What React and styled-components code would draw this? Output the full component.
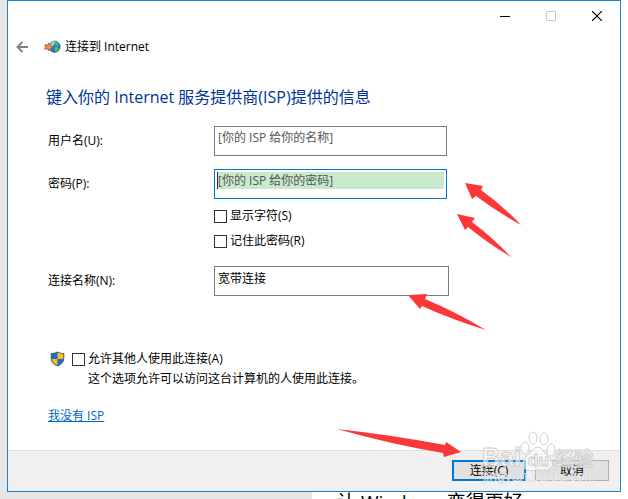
import React from "react";
import styled, { createGlobalStyle, css } from "styled-components";

const GlobalStyle = createGlobalStyle`
  *, *::before, *::after { box-sizing: border-box; }
  body {
    margin: 0;
    background: #fff;
    color: #000;
    font: 12px/16px "Open Sans", "Noto Sans CJK SC", sans-serif;
  }
  button, input { font: inherit; color: inherit; }
`;

const Desktop = styled.div`
  position: relative;
  display: flex;
  flex-direction: column;
  height: 100vh;
  overflow: hidden;
`;

const Stage = styled.div`
  display: flex;
  flex: none;
  padding-right: 7px;
`;

const Edge = styled.div`
  width: 7px;
  background: #e6e6e6;
`;

const Dialog = styled.main`
  position: relative;
  flex: 1;
  display: flex;
  flex-direction: column;
  min-width: 0;
  border: 1px solid #1a80d2;
  background: #fff;
`;

const Controls = styled.div`
  display: flex;
  justify-content: flex-end;
  height: 29px;
`;

const ControlButton = styled.button`
  display: flex;
  align-items: center;
  justify-content: center;
  width: 46px;
  padding: 0;
  border: 0;
  background: none;
  color: ${(p) => (p.disabled ? "#c8c8c8" : "#000")};
`;

const Header = styled.header`
  display: flex;
  align-items: center;
  height: 34px;
  padding-left: 8px;
`;

const BackButton = styled.button`
  display: flex;
  margin-right: 15px;
  padding: 0;
  border: 0;
  background: none;
`;

const Title = styled.span`
  margin-left: 4px;
`;

const Form = styled.form`
  display: flex;
  flex-direction: column;
`;

const Heading = styled.h1`
  margin: 22px 0 18px 38px;
  font-size: 16px;
  line-height: 22px;
  font-weight: 400;
  color: #003399;
`;

const FieldRow = styled.div`
  display: grid;
  grid-template-columns: 166px minmax(0, ${(p) => (p.$wide ? 235 : 233)}px);
  align-items: center;
  margin: 0 40px 13px;
`;

const InputFrame = styled.div`
  height: 30px;
  padding: 2px;
  border: 1px solid ${(p) => (p.$active ? "#0078d7" : "#7a7a7a")};
  background: #fff;
`;

const TextInput = styled.input`
  display: block;
  width: 100%;
  height: 17px;
  padding: 0;
  border: 0;
  border-left: 1px solid transparent;
  background: none;
  outline: 0;
  &::placeholder {
    color: #555;
    opacity: 1;
  }
  ${(p) =>
    p.$active &&
    css`
      border-left-color: #3c1c34;
      background: #c9e9cc;
    `}
`;

const Options = styled.div`
  display: flex;
  flex-direction: column;
  gap: 9px;
  margin: -4px 40px 17px 206px;
`;

const CheckLabel = styled.label`
  display: flex;
  align-items: center;
  gap: 3px;
`;

const CheckBox = styled.input`
  appearance: none;
  flex: none;
  width: 13px;
  height: 13px;
  margin: 0;
  border: 1px solid #333;
  background: #fff;
`;

const Sharing = styled.section`
  display: grid;
  grid-template-columns: 15px 1fr;
  column-gap: 7px;
  row-gap: 4px;
  align-items: center;
  margin: 42px 40px 21px 42px;
`;

const Note = styled.p`
  grid-column: 2;
  margin: 0 0 0 16px;
`;

const HelpLink = styled.a`
  align-self: flex-start;
  margin: 0 0 26px 40px;
  color: #0066cc;
`;

const Footer = styled.footer`
  display: flex;
  justify-content: flex-end;
  gap: 9px;
  padding: 9px 11px 10px;
  border-top: 1px solid #dfdfdf;
  background: #f0f0f0;
`;

const ActionButton = styled.button`
  width: 74px;
  height: 21px;
  padding: 0;
  line-height: 16px;
  border: ${(p) => (p.$primary ? "2px solid #0078d7" : "1px solid #adadad")};
  background: #e1e1e1;
`;

const Below = styled.div`
  display: flex;
  flex: 1;
  min-height: 0;
  overflow: hidden;
`;

const BelowPane = styled.div`
  flex: 0 0 312px;
  background: #e6e6e6;
`;

const BelowText = styled.p`
  margin: 0 0 0 25px;
  font-size: 19px;
  line-height: 20px;
  white-space: nowrap;
`;

const Annotations = styled.svg`
  position: absolute;
  top: 0;
  left: 0;
  pointer-events: none;
`;

const Watermark = styled.div`
  position: absolute;
  right: 20px;
  bottom: 0;
  width: 118px;
  height: 60px;
  pointer-events: none;
`;

const globe = (
  <svg width="17" height="14" viewBox="0 0 17 14" aria-hidden="true">
    <circle cx="10.5" cy="6.7" r="5.7" fill="#2874d0" stroke="#376aa4" strokeWidth=".7" />
    <path d="M6.5 3.3Q8 .7 11 1L12 3.2 9.8 4.7 8.5 7 6 6z" fill="#7fd6f0" />
    <path d="M10.3 1.2l2.2.4 2 2.3-.4 2.3-2.3-.4-1.7-2.4zM10.3 7.3l3-.2 1.6 2-2.6 2.7-1.6-1.4z" fill="#58bd3d" />
    <path d="M.7 4.9h3.6V2.9L8.4 7l-4.1 4.1V9.1H.7L1.5 7z" fill="#f58a4e" stroke="#b04a1c" strokeWidth=".8" />
  </svg>
);

const shield = (
  <svg width="15" height="16" viewBox="0 0 15 16" aria-hidden="true">
    <path d="M7.5.4Q10 2 14.3 2.2V7q0 5.4-6.8 8.6Q.7 12.4.7 7V2.2Q5 2 7.5.4z" fill="#55595d" />
    <path d="M7.5 1.5V8H1.7V3.1Q5.2 2.9 7.5 1.5zM7.5 8h5.7q-.5 4-5.7 6.5z" fill="#1670d0" />
    <path d="M7.5 1.5Q10 2.9 13.3 3.1V8H7.5zM7.5 8v6.5Q2.3 12 1.8 8z" fill="#fdb827" />
  </svg>
);

function Field({ id, label, active, wide, ...input }) {
  return (
    <FieldRow $wide={wide}>
      <label htmlFor={id}>{label}</label>
      <InputFrame $active={active}>
        <TextInput id={id} $active={active} {...input} />
      </InputFrame>
    </FieldRow>
  );
}

function Check({ children }) {
  return (
    <CheckLabel>
      <CheckBox type="checkbox" />
      {children}
    </CheckLabel>
  );
}

export default function App() {
  return (
    <Desktop>
      <GlobalStyle />
      <Stage>
        <Edge />
        <Dialog>
          <Controls>
            <ControlButton aria-label="最小化">
              <svg width="10" height="10"><path d="M0 5.5h10" stroke="currentColor" /></svg>
            </ControlButton>
            <ControlButton aria-label="最大化" disabled>
              <svg width="10" height="10"><path d="M.5.5h9v9h-9z" fill="none" stroke="currentColor" /></svg>
            </ControlButton>
            <ControlButton aria-label="关闭">
              <svg width="10" height="10"><path d="M0 0l10 10M10 0L0 10" stroke="currentColor" strokeWidth="1.2" /></svg>
            </ControlButton>
          </Controls>
          <Header>
            <BackButton aria-label="返回">
              <svg width="13" height="12" viewBox="0 0 13 12">
                <path d="M12 6H1.5M6.5 1l-5 5 5 5" fill="none" stroke="#808080" strokeWidth="1.9" />
              </svg>
            </BackButton>
            {globe}
            <Title>连接到 Internet</Title>
          </Header>
          <Form onSubmit={(e) => e.preventDefault()}>
            <Heading>键入你的 Internet 服务提供商(ISP)提供的信息</Heading>
            <Field id="user" label="用户名(U):" type="text" placeholder="[你的 ISP 给你的名称]" />
            <Field id="password" label="密码(P):" type="password" placeholder="[你的 ISP 给你的密码]" active />
            <Options>
              <Check>显示字符(S)</Check>
              <Check>记住此密码(R)</Check>
            </Options>
            <Field id="connection" label="连接名称(N):" type="text" defaultValue="宽带连接" wide />
            <Sharing>
              {shield}
              <Check>允许其他人使用此连接(A)</Check>
              <Note>这个选项允许可以访问这台计算机的人使用此连接。</Note>
            </Sharing>
            <HelpLink href="#isp">我没有 ISP</HelpLink>
            <Footer>
              <ActionButton type="submit" $primary>连接(C)</ActionButton>
              <ActionButton type="button">取消</ActionButton>
            </Footer>
          </Form>
          <Watermark>
            <svg width="118" height="60" viewBox="0 0 118 60">
              <g fill="#fff" fillOpacity=".6" stroke="#cfcfcf" strokeWidth="1" fontFamily="'Liberation Sans', 'Noto Sans CJK SC', sans-serif" fontWeight="700">
                <ellipse cx="43" cy="17" rx="4" ry="6" />
                <ellipse cx="51" cy="7" rx="4" ry="6" />
                <ellipse cx="62" cy="8" rx="4" ry="6" />
                <ellipse cx="69" cy="19" rx="4" ry="6" />
                <path d="M56 16q-4 0-7 5l-6 6q-4 5-1 10 4 4 14 2 10 2 13-2 4-5-1-10l-6-6q-3-5-6-5z" />
                <text x="0" y="35" fontSize="25">Bai</text>
                <text x="46" y="35" fontSize="17">du</text>
                <text x="73" y="35" fontSize="19">经验</text>
              </g>
              <text x="1" y="50" fill="#fff" fillOpacity=".7" stroke="#ccc" strokeWidth=".3" fontFamily="'Liberation Sans', sans-serif" fontSize="14">jingyan.baidu.com</text>
            </svg>
          </Watermark>
        </Dialog>
      </Stage>
      <Below>
        <BelowPane />
        <BelowText>让 Windows 变得更好</BelowText>
      </Below>
      <Annotations width="628" height="499" viewBox="0 0 628 499" aria-hidden="true">
        <g fill="#fc3737">
          <path d="M465 183L483 186 481 190Q502 205 521 225 499 213 476 196L472 199z" />
          <path d="M457 214L475 218 472 222Q492 237 511 257 489 244 468 227L465 230z" />
          <path d="M408 295L427 294 425 299Q456 312 486 330 453 320 422 306L420 309z" />
          <path d="M337 429Q392 435 445 445L446 442 461 452 444 457 443 453Q390 444 337 429z" />
        </g>
      </Annotations>
    </Desktop>
  );
}
